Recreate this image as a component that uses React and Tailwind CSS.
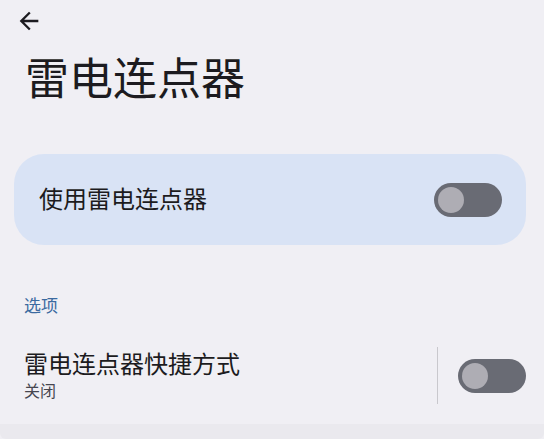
import React, { useState } from 'react';

const cjk = "font-['Roboto','Noto_Sans_CJK_SC',sans-serif]";

const Switch = ({ checked, onChange }) => (
  <button
    onClick={() => onChange(!checked)}
    className={`relative w-[68px] h-[34px] rounded-full flex items-center px-[4px] ${checked ? 'bg-[#3b6aa0] justify-end' : 'bg-[#696b74] justify-start'}`}
  >
    <span className={`block w-[26px] h-[26px] rounded-full ${checked ? 'bg-white' : 'bg-[#aeadb4]'}`} />
  </button>
);

export default function App() {
  const [enabled, setEnabled] = useState(false);
  const [shortcut, setShortcut] = useState(false);

  return (
    <div className={`w-[544px] h-[439px] bg-[#f0eff4] overflow-hidden flex flex-col ${cjk}`}>
      {/* Top bar */}
      <div className="h-[42px] flex items-center pl-[15px]">
        <svg width="28" height="28" viewBox="0 0 24 24" fill="#1c1b20">
          <path d="M20 11H7.83l5.59-5.59L12 4l-8 8 8 8 1.41-1.41L7.83 13H20v-2z" />
        </svg>
      </div>

      <h1 className="pl-[25px] mt-[14px] text-[44px] leading-[48px] text-[#1c1b20]">雷电连点器</h1>

      {/* Main toggle card */}
      <div className="ml-[14px] mr-[18px] mt-[50px] h-[91px] rounded-[30px] bg-[#d9e3f5] flex items-center justify-between pl-[25px] pr-[24px]">
        <span className="text-[24px] text-[#1c1b20]">使用雷电连点器</span>
        <Switch checked={enabled} onChange={setEnabled} />
      </div>

      <div className="pl-[24px] mt-[50px] text-[17px] leading-[22px] text-[#3b6aa0]">选项</div>

      {/* Shortcut row */}
      <div className="mt-[30px] flex items-center pl-[24px] pr-[18px]">
        <div className="flex-1 flex flex-col">
          <span className="text-[24px] leading-[30px] text-[#1c1b20]">雷电连点器快捷方式</span>
          <span className="mt-[2px] text-[16px] leading-[20px] text-[#46464f]">关闭</span>
        </div>
        <div className="w-px h-[57px] bg-[#c9c8cd] mr-[20px]" />
        <Switch checked={shortcut} onChange={setShortcut} />
      </div>

      <div className="mt-auto h-[15px] bg-[#eae9ee] rounded-b-[6px]" />
    </div>
  );
}
